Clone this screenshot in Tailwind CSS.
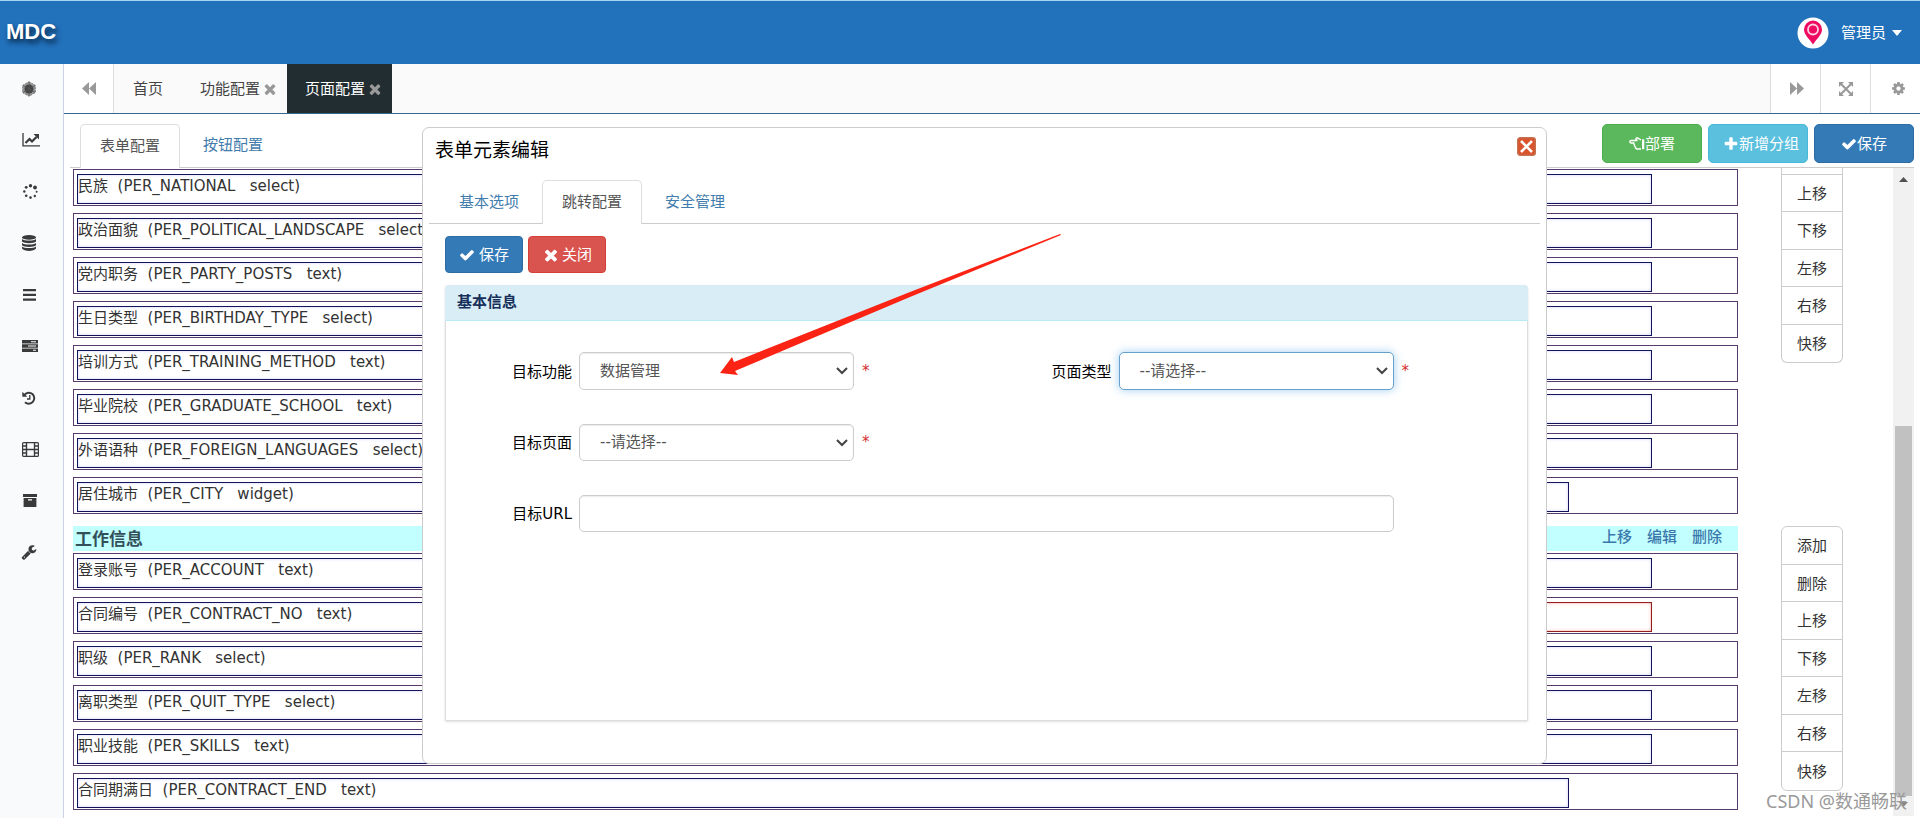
<!DOCTYPE html>
<html lang="zh-CN">
<head>
<meta charset="utf-8">
<title>MDC</title>
<script src="https://cdn.jsdelivr.net/npm/@tailwindcss/browser@4"></script>
</head>
<body class="bg-white">
<svg class="hidden" aria-hidden="true">
  <symbol id="check" viewBox="0 0 1792 1792"><path d="M1671 566q0 40-28 68l-724 724-136 136q-28 28-68 28t-68-28l-136-136-362-362q-28-28-28-68t28-68l136-136q28-28 68-28t68 28l294 295 656-657q28-28 68-28t68 28l136 136q28 28 28 68z"/></symbol>
  <symbol id="times" viewBox="0 0 1792 1792"><path d="M1490 1322q0 40-28 68l-136 136q-28 28-68 28t-68-28l-294-294-294 294q-28 28-68 28t-68-28l-136-136q-28-28-28-68t28-68l294-294-294-294q-28-28-28-68t28-68l136-136q28-28 68-28t68 28l294 294 294-294q28-28 68-28t68 28l136 136q28 28 28 68t-28 68l-294 294 294 294q28 28 28 68z"/></symbol>
  <symbol id="plus" viewBox="0 0 1792 1792"><path d="M1600 736v192q0 40-28 68t-68 28h-416v416q0 40-28 68t-68 28h-192q-40 0-68-28t-28-68v-416h-416q-40 0-68-28t-28-68v-192q0-40 28-68t68-28h416v-416q0-40 28-68t68-28h192q40 0 68 28t28 68v416h416q40 0 68 28t28 68z"/></symbol>
</svg>
<div class="flex h-screen flex-col overflow-hidden pr-[2px] pb-px font-['Noto_Sans','Noto_Sans_CJK_SC',sans-serif] text-[15px] text-[#333]">

  <header class="flex h-16 shrink-0 items-center justify-between border-t border-[#a9d5f5] bg-[#2271bb] pr-[18px] pl-[6px]">
    <h1 class="font-['Liberation_Sans',sans-serif] text-[22px] leading-6 font-bold text-white pb-[2px] [text-shadow:2px_4px_5px_#06223f]">MDC</h1>
    <button class="flex items-center text-white">
      <svg class="mr-3 size-8" viewBox="0 0 32 32"><circle cx="16" cy="16" r="15.500" fill="#fff"/><path d="M16 27.500C13 22.500 7 18 7 12.500a9 9 0 0 1 18 0C25 18 19 22.500 16 27.500z" fill="#ee0a60"/><circle cx="16" cy="12.500" r="5" fill="#ee0a60" stroke="#ffd0e0" stroke-width="1.800"/></svg>
      管理员
      <svg class="ml-[6px] h-[6px] w-[10px]" viewBox="0 0 10 6"><path d="M0 0h10L5 6z" fill="#fff"/></svg>
    </button>
  </header>

  <div class="flex min-h-0 flex-1">
    <nav class="flex w-16 shrink-0 flex-col items-center border-r border-[#ccd2e2] bg-[#f9fafc] pr-[5px] text-[#3a3a3a]">
      <a href="#" aria-label="模块" class="flex h-[50px] items-center"><svg class="size-4" viewBox="0 0 16 16"><path d="M8 .8l6.300 3.600v7.200L8 15.200l-6.300-3.600V4.400z" fill="#999" stroke="#777" stroke-dasharray="2 1"/><circle cx="8" cy="8" r="4.500" fill="#444"/><path d="M8 1v14M2 4.500l12 7M14 4.500l-12 7" stroke="#555" stroke-width=".8"/></svg></a>
      <a href="#" aria-label="图表" class="flex h-[52px] items-center pl-[3px]"><svg class="h-[14px] w-[18px]" viewBox="0 0 18 14" fill="none" stroke="currentColor"><path d="M1 0v12.800h17" stroke-width="1.300"/><path d="M3.500 10l4-4 2.500 2.500 4.500-4.500" stroke-width="2.200"/><path d="M11.500 1H17v5.500z" fill="currentColor" stroke="none"/></svg></a>
      <a href="#" aria-label="加载" class="flex h-[51px] items-center pl-[2px]"><svg class="size-[15px]" viewBox="0 0 15 15" fill="currentColor"><circle cx="7.500" cy="1.800" r="1.700"/><circle cx="12" cy="3.500" r="1.900"/><circle cx="13.600" cy="7.700" r="1"/><circle cx="11.800" cy="12" r="1.200"/><circle cx="7.500" cy="13.600" r="1.300"/><circle cx="3.200" cy="11.800" r="1.300"/><circle cx="1.300" cy="7.500" r="1.200"/><circle cx="3.200" cy="3.300" r="1.400"/></svg></a>
      <a href="#" aria-label="数据库" class="flex h-[52px] items-center"><svg class="h-4 w-[14px]" viewBox="0 0 14 16" fill="currentColor"><ellipse cx="7" cy="2.400" rx="7" ry="2.400"/><path d="M0 4c2 2 12 2 14 0v2.500c-2 2.300-12 2.300-14 0zM0 7.900c2 2 12 2 14 0v2.300c-2 2.300-12 2.300-14 0zM0 11.600c2 2 12 2 14 0v2c-2 3.200-12 3.200-14 0z"/></svg></a>
      <a href="#" aria-label="列表" class="flex h-[51px] items-center"><svg class="h-3 w-[13px]" viewBox="0 0 13 12" fill="currentColor"><path d="M0 0h13v2.300H0zM0 4.700h13V7H0zM0 9.500h13v2.300H0z"/></svg></a>
      <a href="#" aria-label="服务器" class="flex h-[52px] items-center pl-[2px]"><svg class="h-3 w-4" viewBox="0 0 16 12"><path d="M0 0h16v3.400H0zM0 4.300h16v3.400H0zM0 8.600h16V12H0z" fill="currentColor"/><path d="M9 1.200h5v1H9zM6 5.500h8v1H6zM11 9.800h3v1h-3z" fill="#f9fafc"/></svg></a>
      <a href="#" aria-label="历史" class="flex h-[51px] items-center"><svg class="size-[14px]" viewBox="0 0 14 14" fill="none" stroke="currentColor"><path d="M2.600 3.600A5.500 5.500 0 1 1 3 11.200" stroke-width="2"/><path d="M.3.800v5h5z" fill="currentColor" stroke="none"/><path d="M7.800 4v4H5" stroke-width="1.300"/></svg></a>
      <a href="#" aria-label="影片" class="flex h-[52px] items-center pl-[3px]"><svg class="h-[15px] w-[17px]" viewBox="0 0 17 15" fill="none" stroke="currentColor"><rect x=".6" y=".6" width="15.800" height="13.800" rx="1" stroke-width="1.200"/><path d="M4.500 1v13M12.500 1v13M4.500 7.500h8" stroke-width="1.400"/><path d="M1 4h3.500M1 7.500h3.500M1 11h3.500M12.500 4H16M12.500 7.500H16M12.500 11H16" stroke-width="1.300"/></svg></a>
      <a href="#" aria-label="归档" class="flex h-[51px] items-center pl-[2px]"><svg class="h-[13px] w-[14px]" viewBox="0 0 14 13"><path d="M0 0h14v3H0zM.6 4h12.800v9H.6z" fill="currentColor"/><path d="M5 5.200h4v1.300H5z" fill="#f9fafc"/></svg></a>
      <a href="#" aria-label="工具" class="flex h-[52px] items-center"><svg class="size-4" viewBox="0 0 1792 1792" fill="currentColor"><path d="M448 1472q0-26-19-45t-45-19-45 19-19 45 19 45 45 19 45-19 19-45zm644-420l-682 682q-37 37-90 37-52 0-91-37l-106-108q-38-36-38-90 0-53 38-91l681-681q39 98 114.500 173.500t173.500 114.500zm634-435q0 39-23 106-47 134-164.500 217.500t-258.500 83.500q-185 0-316.500-131.500t-131.500-316.500 131.500-316.500 316.500-131.500q58 0 121.500 16.500t107.500 46.500q16 11 16 28t-16 28l-293 169v224l193 107q5-3 79-48.500t135.500-81 70.500-35.500q15 0 23.500 10t8.500 25z"/></svg></a>
    </nav>

    <div class="relative flex min-w-0 flex-1 flex-col">
      <!-- page tabs -->
      <div class="flex h-[50px] shrink-0 border-b border-[#346a8d] bg-[#fafafa] text-[#444]">
        <button aria-label="向左" class="flex w-[50px] items-center justify-center border-r border-[#ddd] bg-white"><svg class="h-[13px] w-[14px]" viewBox="0 0 14 13" fill="#999"><path d="M7 0v13L0 6.500zM14 0v13L7 6.500z"/></svg></button>
        <button class="px-[19px]">首页</button>
        <button class="flex items-center gap-[2px] pr-[9px] pl-[18px]">功能配置<svg class="size-4" fill="#999"><use href="#times"/></svg></button>
        <button class="flex items-center gap-[2px] bg-[#222d32] pr-[9px] pl-[18px] text-white">页面配置<svg class="size-4" fill="#999"><use href="#times"/></svg></button>
        <div class="ml-auto flex bg-white">
          <button aria-label="向右" class="flex w-[50px] items-center justify-center border-l border-[#ddd] pl-[2px]"><svg class="h-[13px] w-[14px]" viewBox="0 0 14 13" fill="#999"><path d="M0 0v13l7-6.500zM7 0v13l7-6.500z"/></svg></button>
          <button aria-label="全屏" class="flex w-[50px] items-center justify-center border-l border-[#ddd]"><svg class="size-[14px]" viewBox="0 0 14 14" fill="#999"><path d="M0 0h5L0 5zM14 0v5L9 0zM0 14V9l5 5zM14 14H9l5-5z"/><path d="M2 2l10 10M12 2L2 12" stroke="#999" stroke-width="2"/></svg></button>
          <button aria-label="设置" class="flex w-[50px] items-center justify-center border-l border-[#ddd] pl-[6px]"><svg class="size-[15px]" viewBox="0 0 1792 1792" fill="#999"><path d="M1152 896q0-106-75-181t-181-75-181 75-75 181 75 181 181 75 181-75 75-181zm512-109v222q0 12-8 23t-20 13l-185 28q-19 54-39 91 35 50 107 138 10 12 10 25t-9 23q-27 37-99 108t-94 71q-12 0-26-9l-138-108q-44 23-91 38-16 136-29 186-7 28-36 28h-222q-14 0-24.500-8.500t-11.500-21.500l-28-184q-49-16-90-37l-141 107q-10 9-25 9-14 0-25-11-126-114-165-168-7-10-7-23 0-12 8-23 15-21 51-66.500t54-70.500q-27-50-41-99l-183-27q-13-2-21-12.500t-8-23.500v-222q0-12 8-23t19-13l186-28q14-46 39-92-40-57-107-138-10-12-10-24 0-10 9-23 26-36 98.500-107.500t94.500-71.500q13 0 26 10l138 107q44-23 91-38 16-136 29-186 7-28 36-28h222q14 0 24.500 8.500t11.500 21.500l28 184q49 16 90 37l142-107q9-9 24-9 13 0 25 10 129 119 165 170 7 8 7 22 0 12-8 23-15 21-51 66.500t-54 70.500q26 50 41 98l183 28q13 2 21 12.500t8 23.500z"/></svg></button>
        </div>
      </div>

      <!-- section tabs and actions -->
      <div class="mr-[6px] ml-[6px] flex h-[54px] shrink-0 items-end border-b border-[#ccc] pl-[10px]">
        <button class="-mb-px h-11 w-[100px] rounded-t-[5px] border border-b-0 border-[#ddd] bg-white pb-[2px] text-[#555]">表单配置</button>
        <button class="ml-[3px] h-11 w-[100px] pb-[2px] text-[#427cac]">按钮配置</button>
        <div class="mb-1 ml-auto flex gap-[6px] text-white">
          <button class="flex h-[39px] w-[100px] items-center justify-center rounded-[5px] border border-[#4cae4c] bg-[#5cb85c]"><svg class="h-[13px] w-4" viewBox="0 0 16 13" fill="none" stroke="#fff" stroke-width="1.400" stroke-linejoin="round"><path d="M12 2.800L8.300.8Q7 .7 7 2l1 1.500H2Q.8 3.700.8 4.800T2 6h3q-.6 1.200.5 2-.3 1.300.8 1.800 0 2.100 2 2.200H12"/><path d="M13 2.300h2.300v9.900H13z" fill="#fff" stroke="none"/></svg>部署</button>
          <button class="flex h-[39px] w-[100px] items-center justify-center rounded-[5px] border border-[#46b8da] bg-[#5bc0de] pl-[6px]"><svg class="size-4" fill="#fff"><use href="#plus"/></svg>新增分组</button>
          <button class="flex h-[39px] w-[100px] items-center justify-center rounded-[5px] border border-[#2e6da4] bg-[#337ab7]"><svg class="size-4" fill="#fff"><use href="#check"/></svg>保存</button>
        </div>
      </div>

      <!-- form canvas -->
      <div class="flex min-h-0 flex-1 pr-[6px] pl-[9px]">
        <div class="min-w-0 flex-1 overflow-hidden">
          <section class="flex gap-[43px]">
            <div id="personal" class="flex min-w-0 flex-1 flex-col gap-[7px] pt-px font-['DejaVu_Sans','Noto_Sans_CJK_SC',sans-serif]"></div>
            <div class="mr-[50px] flex h-[195px] w-[62px] flex-col divide-y divide-[#ccc] rounded-b-[6px] border-x border-b border-[#ccc]">
              <div class="h-[7px] shrink-0"></div>
              <div id="personal-actions" class="grid flex-1 auto-rows-fr divide-y divide-[#ccc]"></div>
            </div>
          </section>
          <section class="flex gap-[43px] pt-[12px]">
            <div class="min-w-0 flex-1">
              <div class="mb-[2px] flex h-[25px] items-center justify-between bg-[#c2ffff] pr-4 pl-[2px]">
                <h2 class="text-[17px] leading-6 font-bold text-[#33505a]">工作信息</h2>
                <div class="flex gap-[15px] pb-[6px] leading-5 font-medium text-[#3a78ac]"><a href="#">上移</a><a href="#">编辑</a><a href="#">删除</a></div>
              </div>
              <div id="work" class="flex flex-col gap-[7px] font-['DejaVu_Sans','Noto_Sans_CJK_SC',sans-serif]"></div>
            </div>
            <div class="mr-[50px] w-[62px]">
              <div id="work-actions" class="grid h-[265px] auto-rows-fr divide-y divide-[#ccc] rounded-[6px] border border-[#ccc]"></div>
            </div>
          </section>
        </div>
        <div class="mb-[2px] flex w-[21px] flex-col items-center bg-[#f1f1f1] py-[9px]">
          <svg class="h-[5px] w-[9px] shrink-0" viewBox="0 0 9 5"><path d="M0 5h9L4.500 0z" fill="#505050"/></svg>
          <div class="mt-[244px] mb-[6px] w-[17px] flex-1 bg-[#c1c1c1]"></div>
          <svg class="h-[5px] w-[9px] shrink-0" viewBox="0 0 9 5"><path d="M0 0h9L4.500 5z" fill="#888"/></svg>
        </div>
      </div>

      <!-- element editor dialog -->
      <div role="dialog" aria-label="表单元素编辑" class="absolute top-[63px] right-[373px] bottom-[54px] left-[358px] flex flex-col rounded-[7px] border border-[#ccc] bg-white px-[6px]">
        <div class="flex h-[52px] shrink-0 items-center justify-between pr-[4px] pb-[8px] pl-[6px]">
          <h2 class="text-[19px] leading-7 text-black">表单元素编辑</h2>
          <button aria-label="关闭窗口" class="mb-[7px]"><svg class="size-[19px]" viewBox="0 0 19 19"><rect x=".7" y=".7" width="17.600" height="17.600" rx="2.500" fill="#d9532c" stroke="#c4714f" stroke-width="1.400"/><path d="M4 4l11 11M15 4L4 15" stroke="#fff" stroke-width="2.600"/></svg></button>
        </div>
        <div class="flex h-11 shrink-0 gap-[3px] border-b border-[#ccc] pl-[10px] text-[#427cac]">
          <button class="w-[100px]">基本选项</button>
          <button class="-mb-px w-[100px] rounded-t-[5px] border border-b-0 border-[#ddd] bg-white pb-[2px] text-[#555]">跳转配置</button>
          <button class="w-[100px]">安全管理</button>
        </div>
        <div class="flex flex-1 flex-col pt-3 pr-3 pb-[42px] pl-4">
          <div class="flex gap-[5px] text-white">
            <button class="flex h-[37px] w-[78px] items-center justify-center gap-1 rounded border border-[#2e6da4] bg-[#337ab7]"><svg class="size-4" fill="#fff"><use href="#check"/></svg>保存</button>
            <button class="flex h-[37px] w-[78px] items-center justify-center gap-[2px] rounded border border-[#d43f3a] bg-[#d9534f]"><svg class="size-[18px]" fill="#fff"><use href="#times"/></svg>关闭</button>
          </div>
          <form class="mt-3 flex-1 rounded-t border border-[#ddd] font-['DejaVu_Sans','Noto_Sans_CJK_SC',sans-serif] shadow-sm">
            <h3 class="-mx-px -mt-px flex h-9 items-center rounded-t border-b border-[#bce8f1] bg-[#d9edf7] pl-[12px] font-bold text-[#16305a]">基本信息</h3>
            <div class="grid grid-cols-2 gap-y-[34px] pt-[31px]">
              <div class="flex items-center">
                <label for="fn" class="w-[133px] pr-[7px] pt-[2px] text-right text-black">目标功能</label>
                <div class="relative"><select id="fn" class="h-[38px] w-[275px] appearance-none rounded-[5px] border border-[#ccc] bg-white pl-5 text-[#555] shadow-[inset_0_1px_1px_rgba(0,0,0,0.08)]"><option>数据管理</option></select><svg class="pointer-events-none absolute top-[15px] right-[6px] h-2 w-3" viewBox="0 0 12 8" fill="none" stroke="#444" stroke-width="2"><path d="M1 1l5 5 5-5"/></svg></div>
                <span class="pl-2 text-[#d32f2f]">*</span>
              </div>
              <div class="flex items-center">
                <label for="type" class="w-[132px] pr-[7px] pt-[2px] text-right text-black">页面类型</label>
                <div class="relative"><select id="type" class="h-[38px] w-[275px] appearance-none rounded-[5px] border border-[#66a0cc] bg-white pl-5 text-[#555] shadow-[0_0_10px_rgba(102,175,233,0.6)]"><option>--请选择--</option></select><svg class="pointer-events-none absolute top-[15px] right-[6px] h-2 w-3" viewBox="0 0 12 8" fill="none" stroke="#444" stroke-width="2"><path d="M1 1l5 5 5-5"/></svg></div>
                <span class="pl-2 text-[#d32f2f]">*</span>
              </div>
              <div class="col-span-2 flex items-center">
                <label for="page" class="w-[133px] pr-[7px] pt-[2px] text-right text-black">目标页面</label>
                <div class="relative"><select id="page" class="h-[37px] w-[275px] appearance-none rounded-[5px] border border-[#ccc] bg-white pl-5 text-[#555] shadow-[inset_0_1px_1px_rgba(0,0,0,0.08)]"><option>--请选择--</option></select><svg class="pointer-events-none absolute top-[15px] right-[6px] h-2 w-3" viewBox="0 0 12 8" fill="none" stroke="#444" stroke-width="2"><path d="M1 1l5 5 5-5"/></svg></div>
                <span class="pl-2 text-[#d32f2f]">*</span>
              </div>
              <div class="col-span-2 flex items-center pr-[133px]">
                <label for="url" class="w-[133px] pr-[7px] pt-[2px] text-right text-black">目标URL</label>
                <input id="url" type="text" class="h-[37px] min-w-0 flex-1 rounded-[5px] border border-[#ccc] px-3 shadow-[inset_0_1px_1px_rgba(0,0,0,0.08)]">
              </div>
            </div>
          </form>
        </div>
        <!-- pointer arrow -->
        <svg class="pointer-events-none absolute top-[105px] left-[295px] h-[144px] w-[345px]" viewBox="718 233 345 144"><path d="M720 373L732 357L734 362L910 292L1060 234L1061 235L910 297L735 371L738 375z" fill="#fb2314"/></svg>
      </div>
    </div>
  </div>
</div>
<div class="pointer-events-none absolute right-[15px] bottom-[4px] font-['Noto_Sans','Noto_Sans_CJK_SC',sans-serif] text-[18px] leading-7 text-[#999]">CSDN @数通畅联</div>

<script>
const box = 'h-[30px] w-[1575px] border border-[#14145a] leading-[22px] whitespace-nowrap shadow-[inset_0_0_3px_#ccccff]';
const wide = 'h-[30px] w-[1492px] border border-[#14145a] leading-[22px] whitespace-nowrap shadow-[inset_0_0_3px_#ccccff]';
const half = 'h-[30px] w-[787px] border border-[#14145a] leading-[22px] whitespace-nowrap shadow-[inset_0_0_3px_#ccccff]';
const required = '<div class="h-[30px] w-[788px] border border-[#8f2020] shadow-[inset_0_0_3px_#ff9999]"></div>';
const row = (r) => `<div class="flex h-[37px] border border-[#5a3a6a] px-[3px] pt-[4px]"><div class="${r[3] || box}">${r[0]}&nbsp; (${r[1]}&nbsp; &nbsp;${r[2]})</div>${r[4] || ''}</div>`;
document.getElementById('personal').innerHTML = [
  ['民族', 'PER_NATIONAL', 'select'], ['政治面貌', 'PER_POLITICAL_LANDSCAPE', 'select'],
  ['党内职务', 'PER_PARTY_POSTS', 'text'], ['生日类型', 'PER_BIRTHDAY_TYPE', 'select'],
  ['培训方式', 'PER_TRAINING_METHOD', 'text'], ['毕业院校', 'PER_GRADUATE_SCHOOL', 'text'],
  ['外语语种', 'PER_FOREIGN_LANGUAGES', 'select'], ['居住城市', 'PER_CITY', 'widget', wide]
].map(row).join('');
document.getElementById('work').innerHTML = [
  ['登录账号', 'PER_ACCOUNT', 'text'], ['合同编号', 'PER_CONTRACT_NO', 'text', half, required],
  ['职级', 'PER_RANK', 'select'], ['离职类型', 'PER_QUIT_TYPE', 'select'],
  ['职业技能', 'PER_SKILLS', 'text'], ['合同期满日', 'PER_CONTRACT_END', 'text', wide]
].map(row).join('');
const buttons = (names) => names.map(t => `<button>${t}</button>`).join('');
const moves = ['上移', '下移', '左移', '右移', '快移'];
document.getElementById('personal-actions').innerHTML = buttons(moves);
document.getElementById('work-actions').innerHTML = buttons(['添加', '删除', ...moves]);
</script>
</body>
</html>
